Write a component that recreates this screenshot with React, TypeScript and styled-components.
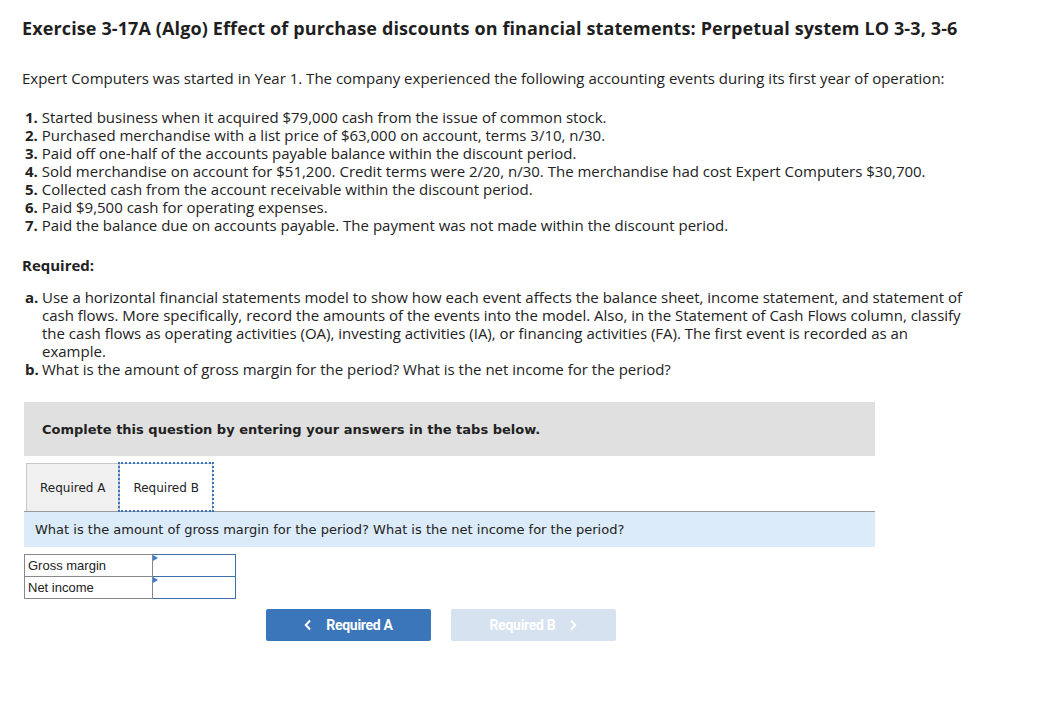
import styled, { createGlobalStyle } from "styled-components";

const GlobalStyle = createGlobalStyle`
  body {
    margin: 0;
    background: #ffffff;
    color: #222222;
    font-family: "Open Sans", "Lato", sans-serif;
  }
`;

const events = [
  "Started business when it acquired $79,000 cash from the issue of common stock.",
  "Purchased merchandise with a list price of $63,000 on account, terms 3/10, n/30.",
  "Paid off one-half of the accounts payable balance within the discount period.",
  "Sold merchandise on account for $51,200. Credit terms were 2/20, n/30. The merchandise had cost Expert Computers $30,700.",
  "Collected cash from the account receivable within the discount period.",
  "Paid $9,500 cash for operating expenses.",
  "Paid the balance due on accounts payable. The payment was not made within the discount period.",
];

const requirements = [
  {
    label: "a.",
    text: "Use a horizontal financial statements model to show how each event affects the balance sheet, income statement, and statement of cash flows. More specifically, record the amounts of the events into the model. Also, in the Statement of Cash Flows column, classify the cash flows as operating activities (OA), investing activities (IA), or financing activities (FA). The first event is recorded as an example.",
  },
  {
    label: "b.",
    text: "What is the amount of gross margin for the period? What is the net income for the period?",
  },
];

export default function App() {
  return (
    <>
      <GlobalStyle />
      <Page>
        <Title>
          Exercise 3-17A (Algo) Effect of purchase discounts on financial statements: Perpetual system LO 3-3, 3-6
        </Title>
        <Intro>
          Expert Computers was started in Year 1. The company experienced the following accounting events during its first year of operation:
        </Intro>
        <EventList>
          {events.map((text, i) => (
            <EventItem key={i}>
              <Num>{i + 1}.</Num> {text}
            </EventItem>
          ))}
        </EventList>
        <RequiredHeading>Required:</RequiredHeading>
        <ReqList>
          {requirements.map((r) => (
            <ReqItem key={r.label}>
              <ReqLabel>{r.label}</ReqLabel>
              <span>{r.text}</span>
            </ReqItem>
          ))}
        </ReqList>

        <Panel>
          <Instruction>Complete this question by entering your answers in the tabs below.</Instruction>
          <Tabs>
            <Tab>Required A</Tab>
            <Tab $active>Required B</Tab>
          </Tabs>
          <Question>
            What is the amount of gross margin for the period? What is the net income for the period?
          </Question>
          <AnswerTable>
            <tbody>
              {["Gross margin", "Net income"].map((label) => (
                <tr key={label}>
                  <LabelCell>{label}</LabelCell>
                  <InputCell>
                    <Marker />
                  </InputCell>
                </tr>
              ))}
            </tbody>
          </AnswerTable>
          <NavRow>
            <NavButton>
              <Chevron viewBox="0 0 8 12">
                <path d="M6 1.5 1.8 6 6 10.5" />
              </Chevron>
              Required A
            </NavButton>
            <NavButton $disabled>
              Required B
              <Chevron viewBox="0 0 8 12">
                <path d="M2 1.5 6.2 6 2 10.5" />
              </Chevron>
            </NavButton>
          </NavRow>
        </Panel>
      </Page>
    </>
  );
}

const Page = styled.div`
  padding: 16px 0 0 22px;
  width: 1000px;
`;

const Title = styled.h1`
  margin: 0;
  font-size: 18px;
  font-weight: 700;
  line-height: 24px;
  letter-spacing: 0.12px;
  color: #1f1f1f;
`;

const Intro = styled.p`
  margin: 29px 0 0;
  font-size: 15px;
  line-height: 18px;
`;

const EventList = styled.div`
  margin-top: 21px;
  padding-left: 3px;
`;

const EventItem = styled.div`
  font-size: 15px;
  line-height: 18px;
`;

const Num = styled.b`
  font-weight: 700;
`;

const RequiredHeading = styled.div`
  margin-top: 22px;
  font-size: 15px;
  font-weight: 700;
  line-height: 18px;
`;

const ReqList = styled.div`
  margin-top: 14px;
  padding-left: 3px;
  width: 941px;
`;

const ReqItem = styled.div`
  display: flex;
  font-size: 15px;
  line-height: 18px;
`;

const ReqLabel = styled.b`
  flex: 0 0 16px;
  margin-right: 1px;
  font-weight: 700;
`;

const Panel = styled.div`
  margin-top: 24px;
  margin-left: 2px;
  width: 851px;
  font-family: "DejaVu Sans", Verdana, sans-serif;
`;

const Instruction = styled.div`
  height: 54px;
  display: flex;
  align-items: center;
  padding-left: 18px;
  background: #e0e0e0;
  font-size: 13px;
  font-weight: 700;
  color: #222;
`;

const Tabs = styled.div`
  display: flex;
  margin-top: 7px;
  padding-left: 2px;
  border-bottom: 1px solid #999;
`;

const Tab = styled.div<{ $active?: boolean }>`
  height: 47px;
  display: flex;
  align-items: center;
  padding: 0 13px;
  font-size: 12px;
  color: #222;
  background: ${({ $active }) => ($active ? "#fff" : "#f0f0f0")};
  border: 1px solid #c8c8c8;
  border-bottom: none;
  margin-bottom: ${({ $active }) => ($active ? "-1px" : "0")};
  outline: ${({ $active }) => ($active ? "2px dotted #3a73c0" : "none")};
  outline-offset: -1px;
  position: relative;
`;

const Question = styled.div`
  height: 35px;
  display: flex;
  align-items: center;
  padding-left: 11px;
  background: #dbebf9;
  font-size: 13px;
  color: #222;
`;

const AnswerTable = styled.table`
  margin-top: 7px;
  border-collapse: collapse;
  font-family: "Liberation Sans", Arial, sans-serif;
  font-size: 13px;
`;

const LabelCell = styled.td`
  width: 124px;
  height: 21px;
  padding: 0 0 0 3px;
  border: 1px solid #888;
  color: #222;
`;

const InputCell = styled.td`
  width: 82px;
  padding: 0;
  border: 1.5px solid #3f6fae;
  position: relative;
`;

const Marker = styled.span`
  position: absolute;
  top: 0;
  left: 0;
  border-top: 3px solid transparent;
  border-bottom: 3px solid transparent;
  border-left: 5px solid #3a7bd5;
`;

const NavRow = styled.div`
  display: flex;
  gap: 20px;
  margin: 10px 0 0 242px;
`;

const NavButton = styled.div<{ $disabled?: boolean }>`
  width: 165px;
  height: 32px;
  display: flex;
  align-items: center;
  justify-content: center;
  gap: 14px;
  border-radius: 2px;
  font-family: "Roboto", "Liberation Sans", sans-serif;
  font-weight: 700;
  font-size: 14px;
  letter-spacing: -0.3px;
  color: #fff;
  background: ${({ $disabled }) => ($disabled ? "#d6e2f0" : "#3b76ba")};
`;

const Chevron = styled.svg`
  width: 8px;
  height: 12px;
  fill: none;
  stroke: #fff;
  stroke-width: 2;
`;
